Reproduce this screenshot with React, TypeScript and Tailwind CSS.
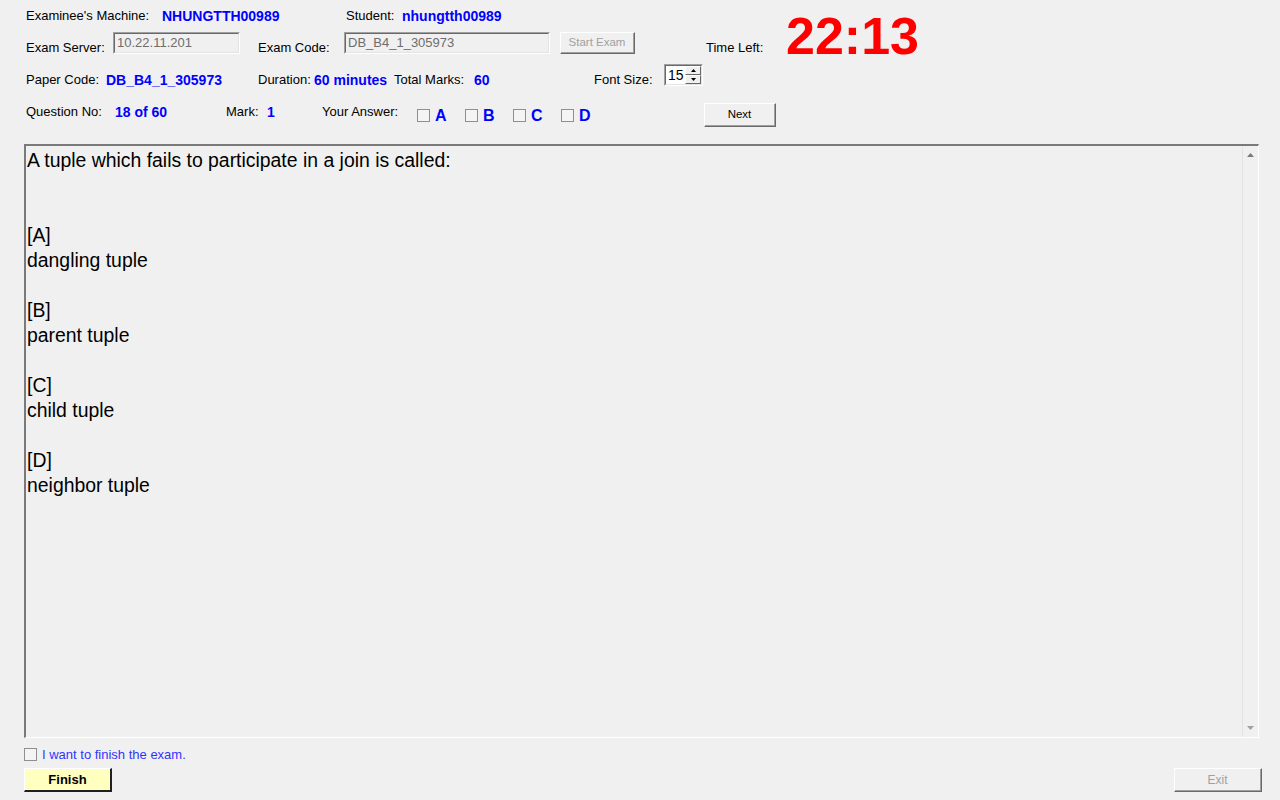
import { ReactNode } from "react";

const label = "text-[13px] leading-[16px] text-[#000] whitespace-nowrap";
const value = "text-[14px] leading-[16px] font-bold text-[#0000ff] whitespace-nowrap";

// sunken 3D box (disabled textbox look)
const Sunken = ({ className, children }: { className: string; children?: ReactNode }) => (
  <div className={`border-t border-l border-[#a0a0a0] border-r-white border-b-white border-r border-b ${className}`}>
    <div className="h-full w-full border-t border-l border-[#696969] border-r-[#e3e3e3] border-b-[#e3e3e3] border-r border-b">
      {children}
    </div>
  </div>
);

const Raised = ({ className, children }: { className: string; children?: ReactNode }) => (
  <div className={`border-t border-l border-white border-r border-b border-r-[#696969] border-b-[#696969] ${className}`}>
    <div className="h-full w-full flex items-center justify-center border-r border-b border-[#a0a0a0] border-t-transparent border-l-transparent">
      {children}
    </div>
  </div>
);

const CheckBox = ({ className = "" }: { className?: string }) => (
  <div className={`w-[13px] h-[13px] shrink-0 border border-[#8e8f8f] bg-[#f4f4f4] ${className}`} />
);

const answers = ["A", "B", "C", "D"];

const content = [
  "A tuple which fails to participate in a join is called:",
  "",
  "",
  "[A]",
  "dangling tuple",
  "",
  "[B]",
  "parent tuple",
  "",
  "[C]",
  "child tuple",
  "",
  "[D]",
  "neighbor tuple",
];

export default function App() {
  return (
    <div
      className="w-[1280px] h-[800px] bg-[#f0f0f0] flex flex-col overflow-hidden text-black"
      style={{ fontFamily: '"Liberation Sans", Arial, sans-serif' }}
    >
      {/* header rows 1-2 with timer */}
      <div className="flex pt-[8px] pl-[26px]">
        <div className="flex flex-col">
          <div className="flex h-[16px]">
            <div className={`${label} w-[136px]`}>Examinee's Machine:</div>
            <div className={`${value} w-[184px]`}>NHUNGTTH00989</div>
            <div className={`${label} w-[56px]`}>Student:</div>
            <div className={value}>nhungtth00989</div>
          </div>
          <div className="flex h-[22px] mt-[8px]">
            <div className={`${label} w-[87px] pt-[8px]`}>Exam Server:</div>
            <Sunken className="w-[127px] h-[22px]">
              <div className="text-[13px] leading-[18px] text-[#6d6d6d] pl-[2px]">10.22.11.201</div>
            </Sunken>
            <div className={`${label} w-[86px] ml-[18px] pt-[8px]`}>Exam Code:</div>
            <Sunken className="w-[206px] h-[22px]">
              <div className="text-[13px] leading-[18px] text-[#6d6d6d] pl-[2px]">DB_B4_1_305973</div>
            </Sunken>
            <Raised className="w-[75px] h-[22px] ml-[10px]">
              <span className="text-[11.5px] text-[#a0a0a0]">Start Exam</span>
            </Raised>
            <div className={`${label} w-[80px] ml-[71px] pt-[8px]`}>Time Left:</div>
          </div>
        </div>
        <div className="mt-[2px] text-[52px] leading-[52px] font-bold text-[#ff0000]">22:13</div>
      </div>

      {/* row 3 */}
      <div className="flex h-[22px] mt-[2px] pl-[26px]">
        <div className={`${label} w-[80px] pt-[8px]`}>Paper Code:</div>
        <div className={`${value} w-[152px] pt-[8px]`}>DB_B4_1_305973</div>
        <div className={`${label} w-[56px] pt-[8px]`}>Duration:</div>
        <div className={`${value} w-[80px] pt-[8px]`}>60 minutes</div>
        <div className={`${label} w-[80px] pt-[8px]`}>Total Marks:</div>
        <div className={`${value} w-[120px] pt-[8px]`}>60</div>
        <div className={`${label} w-[70px] pt-[8px]`}>Font Size:</div>
        <Sunken className="w-[39px] h-[22px] bg-white">
          <div className="flex h-full">
            <div className="flex-1 text-[14px] leading-[18px] pl-[2px]">15</div>
            <div className="w-[16px] flex flex-col">
              <div className="h-1/2 bg-[#f0f0f0] border-t border-l border-white border-r border-b border-r-[#696969] border-b-[#696969] flex items-center justify-center">
                <svg width="5" height="3" viewBox="0 0 5 3"><polygon points="2.5,0 5,3 0,3" fill="#000" /></svg>
              </div>
              <div className="h-1/2 bg-[#f0f0f0] border-t border-l border-white border-r border-b border-r-[#696969] border-b-[#696969] flex items-center justify-center">
                <svg width="5" height="3" viewBox="0 0 5 3"><polygon points="0,0 5,0 2.5,3" fill="#000" /></svg>
              </div>
            </div>
          </div>
        </Sunken>
      </div>

      {/* row 4 */}
      <div className="flex h-[24px] mt-[17px] pl-[26px]">
        <div className={`${label} w-[89px] pt-[1px]`}>Question No:</div>
        <div className={`${value} w-[111px] pt-[1px]`}>18 of 60</div>
        <div className={`${label} w-[41px] pt-[1px]`}>Mark:</div>
        <div className={`${value} w-[55px] pt-[1px]`}>1</div>
        <div className={`${label} w-[95px] pt-[1px]`}>Your Answer:</div>
        {answers.map((a) => (
          <div key={a} className="flex w-[48px]">
            <CheckBox className="mt-[6px]" />
            <span className="ml-[5px] pt-[5px] text-[16px] leading-[16px] font-bold text-[#0000ff]">{a}</span>
          </div>
        ))}
        <Raised className="w-[72px] h-[24px] ml-[95px]">
          <span className="text-[11.5px]">Next</span>
        </Raised>
      </div>

      {/* question area */}
      <div className="ml-[24px] mt-[17px] w-[1235px] h-[594px] flex border-t-2 border-l-2 border-t-[#7a7a7a] border-l-[#7a7a7a] border-r border-b border-r-white border-b-white">
        <div className="flex-1 pl-[1px] pt-[2px] text-[19.4px] leading-[25px]">
          {content.map((line, i) => (
            <div key={i} className="h-[25px] whitespace-nowrap">{line}</div>
          ))}
        </div>
        <div className="w-[16px] border-l border-[#e3e3e3] bg-[#f0f0f0] flex flex-col justify-between items-center py-[7px]">
          <svg width="7" height="4" viewBox="0 0 7 4"><polygon points="3.5,0 7,4 0,4" fill="#7a7a7a" /></svg>
          <svg width="7" height="4" viewBox="0 0 7 4"><polygon points="0,0 7,0 3.5,4" fill="#a0a0a0" /></svg>
        </div>
      </div>

      {/* finish checkbox */}
      <div className="flex items-center mt-[10px] ml-[24px] h-[13px]">
        <CheckBox />
        <span className="ml-[5px] text-[13px] leading-[16px] text-[#3333ff]">I want to finish the exam.</span>
      </div>

      {/* buttons */}
      <div className="flex justify-between mt-[7px] ml-[24px] mr-[18px]">
        <div className="w-[88px] h-[24px] bg-[#ffffc0] border-t border-l border-white border-r-2 border-b-2 border-r-[#202020] border-b-[#202020] flex items-center justify-center">
          <span className="text-[13px] font-bold">Finish</span>
        </div>
        <Raised className="w-[88px] h-[24px]">
          <span className="text-[12px] text-[#a0a0a0]">Exit</span>
        </Raised>
      </div>
    </div>
  );
}
